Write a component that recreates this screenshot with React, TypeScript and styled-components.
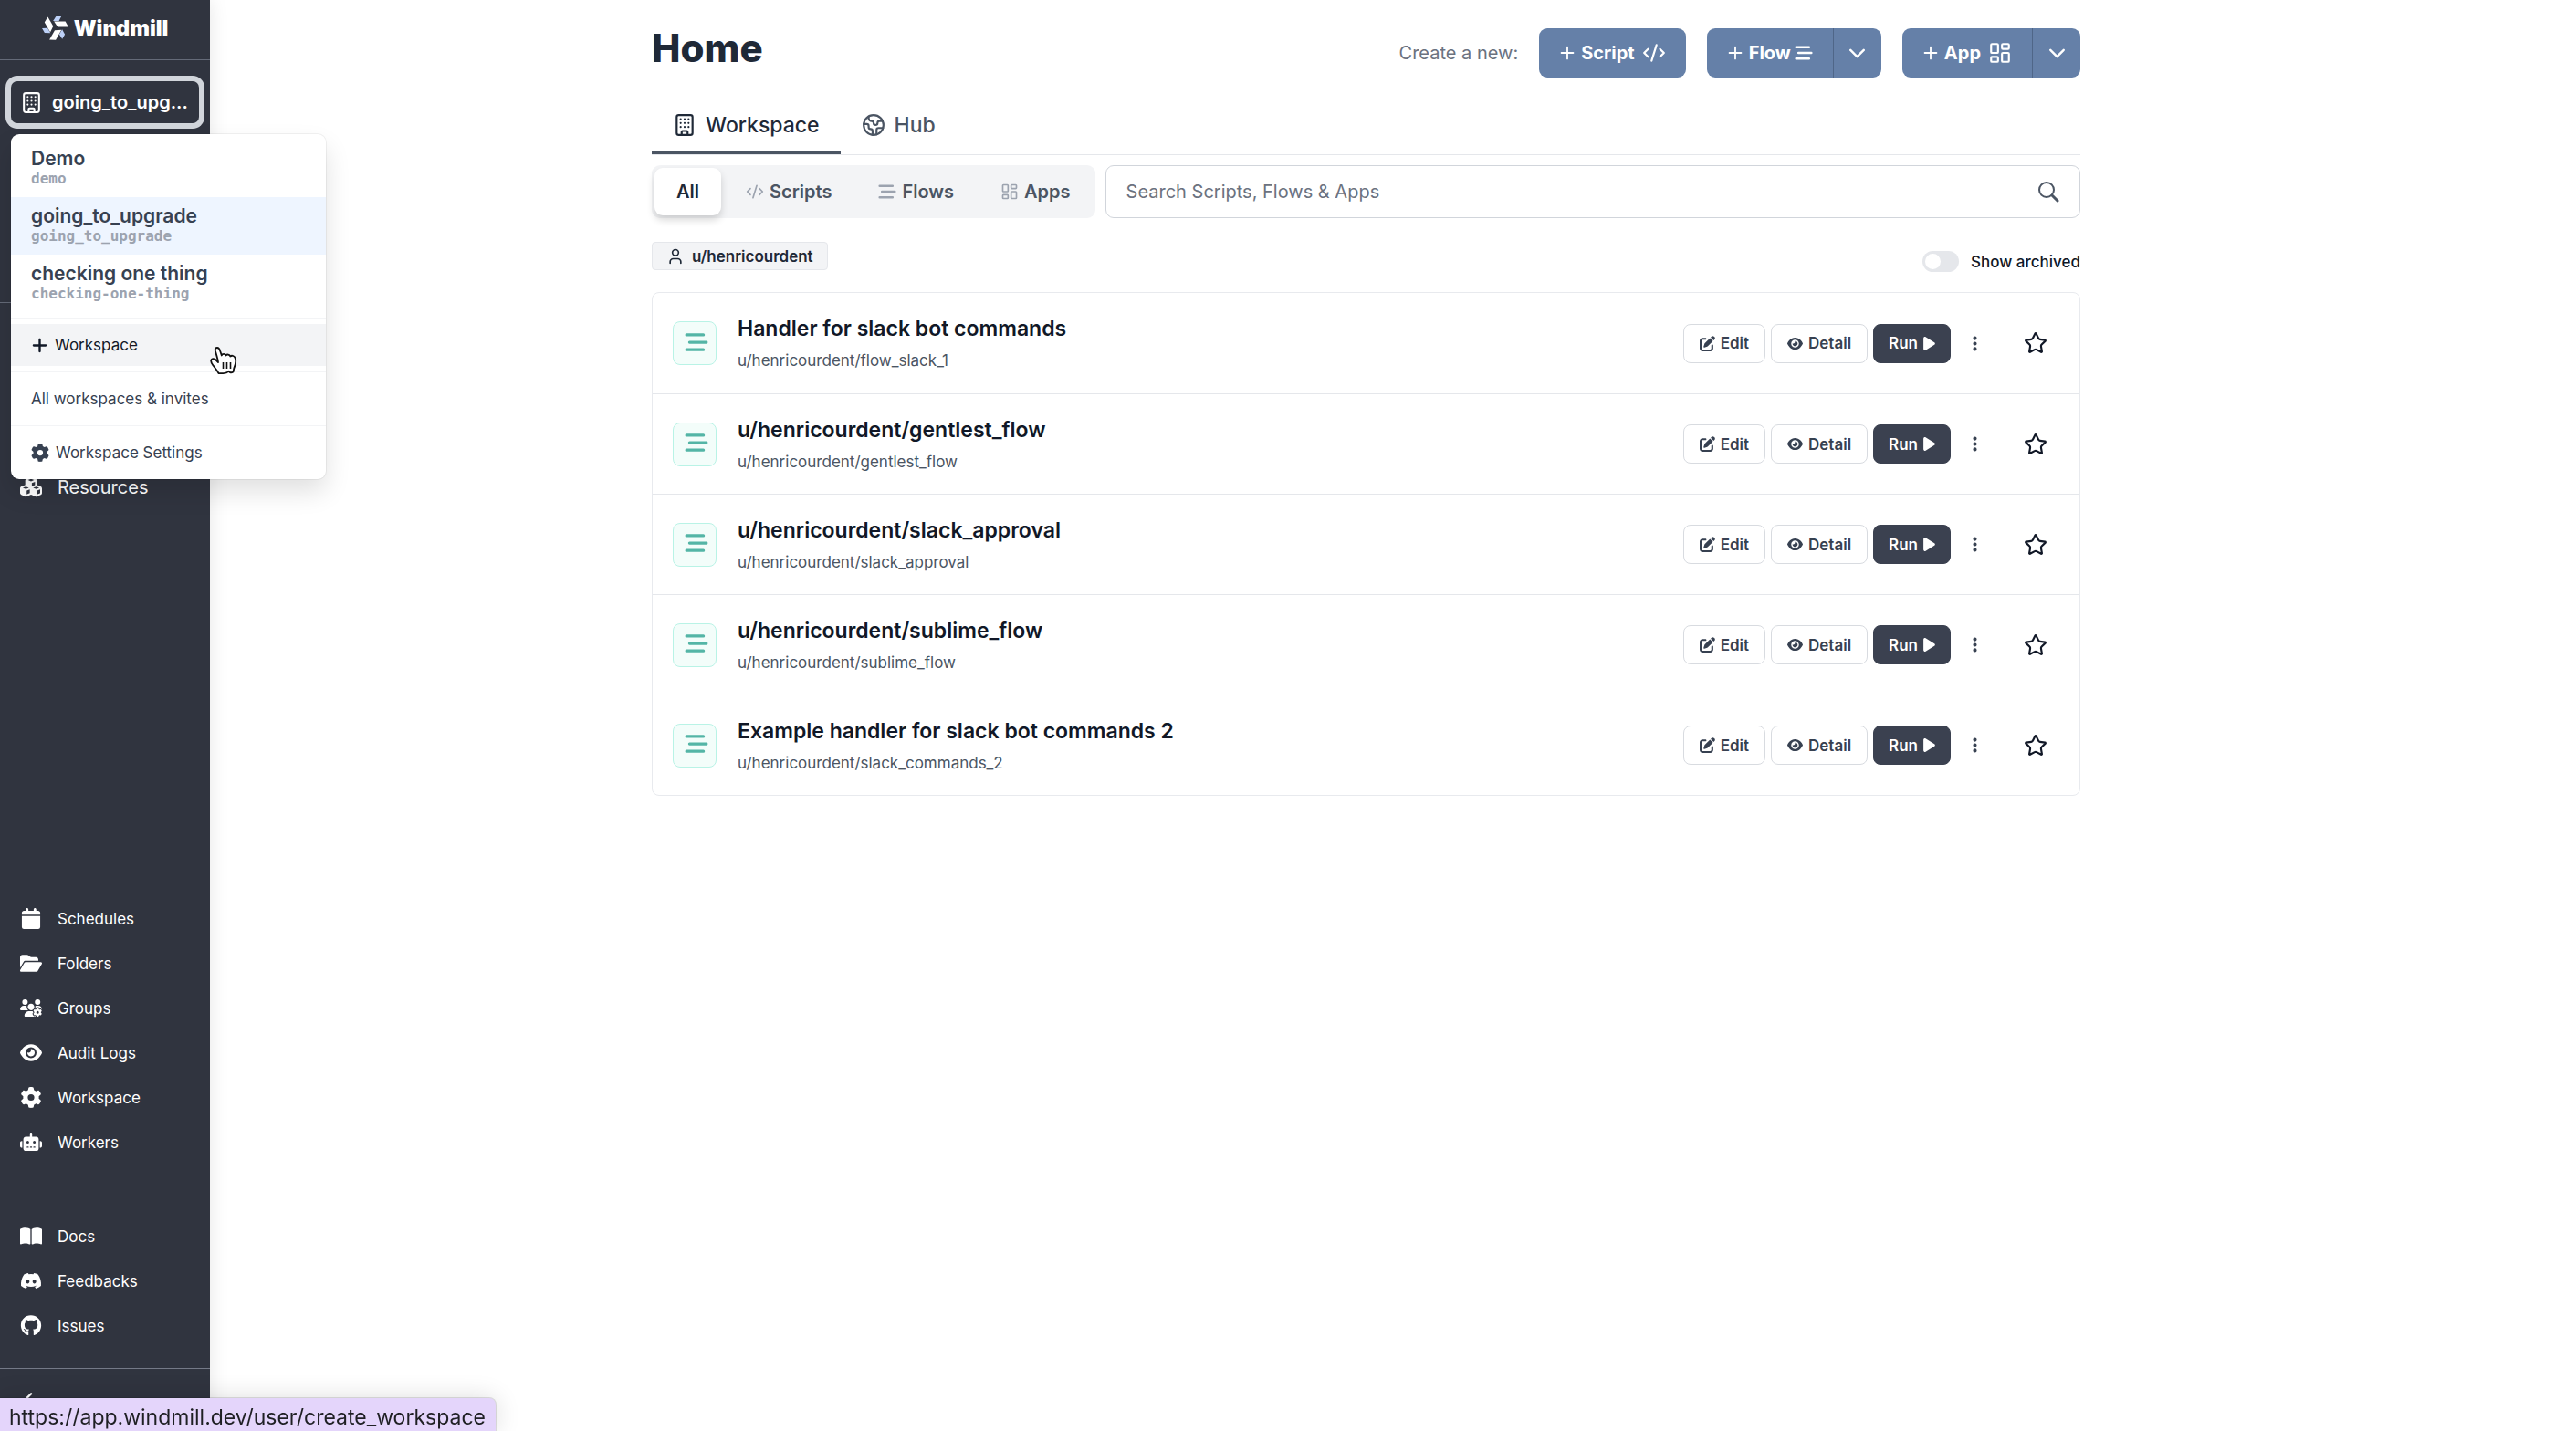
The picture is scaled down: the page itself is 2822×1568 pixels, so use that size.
import React from "react";
import styled, { createGlobalStyle, css } from "styled-components";
import {
  Building,
  ChevronDown,
  ChevronLeft,
  CodeXml,
  Earth,
  LayoutDashboard,
  Plus,
  Star,
  User,
} from "lucide-react";
import {
  FaBookOpen,
  FaCalendar,
  FaCubes,
  FaDiscord,
  FaEllipsisVertical,
  FaEye,
  FaFolderOpen,
  FaGear,
  FaGithub,
  FaPenToSquare,
  FaPlay,
  FaPlus,
  FaRobot,
  FaUsersGear,
} from "react-icons/fa6";

const GlobalStyle = createGlobalStyle`
  *, *::before, *::after { box-sizing: border-box; }
  body {
    margin: 0;
    background: #ffffff;
    color: #111827;
    font-family: Inter, "Liberation Sans", sans-serif;
    font-size: 17px;
  }
  h1, h2, p, ul { margin: 0; padding: 0; }
  ul { list-style: none; }
  a { color: inherit; text-decoration: none; }
  button, input { font: inherit; color: inherit; }
  button { background: none; border: 0; padding: 0; cursor: pointer; }
  svg { display: block; flex: none; }
`;

/* ---------- Shell ---------- */

const Shell = styled.div`
  display: flex;
  min-height: 100vh;
`;

const Sidebar = styled.aside`
  display: flex;
  flex-direction: column;
  flex: none;
  width: 230px;
  background: #30343f;
  color: #ffffff;
  box-shadow: 0 0 20px rgba(0, 0, 0, 0.1);
`;

const Brand = styled.a`
  display: flex;
  align-items: center;
  justify-content: center;
  gap: 6px;
  height: 66px;
  padding-bottom: 4px;
  border-bottom: 1px solid #646a78;
  font-size: 23px;
  font-weight: 900;
`;

const PickerSection = styled.div`
  position: relative;
  height: 266px;
  padding: 23px 12px 0;
  border-bottom: 1px solid #646a78;
`;

const PickerButton = styled.button`
  display: flex;
  align-items: center;
  gap: 10px;
  width: 100%;
  height: 46px;
  padding: 0 10px;
  border-radius: 7px;
  box-shadow: 0 0 0 6px #d1d5db;
  font-size: 20px;
  font-weight: 600;
`;

const PickerLabel = styled.span`
  white-space: nowrap;
`;

const Nav = styled.nav<{ $place: "top" | "bottom" }>`
  ${(p) =>
    p.$place === "top"
      ? css`
          padding-top: 177px;
          font-size: 20px;
        `
      : css`
          display: flex;
          flex-direction: column;
          gap: 54px;
          margin-top: auto;
          padding-bottom: 22px;
        `}
`;

const NavLink = styled.a`
  display: flex;
  align-items: center;
  gap: 17px;
  height: 49px;
  padding-left: 22px;

  svg {
    width: 24px;
  }
`;

const CollapseBar = styled.button`
  display: flex;
  align-items: flex-start;
  height: 69px;
  padding: 20px 16px;
  border-top: 1px solid #747987;
`;

/* ---------- Workspace menu ---------- */

const Menu = styled.div`
  position: absolute;
  z-index: 2;
  top: 81px;
  left: 12px;
  width: 345px;
  border-radius: 9px;
  background: #ffffff;
  color: #374151;
  box-shadow: 0 0 0 1px rgba(0, 0, 0, 0.05), 0 14px 28px rgba(0, 0, 0, 0.12);
  overflow: hidden;
`;

const MenuGroup = styled.div`
  padding: 6px 0;

  & + & {
    border-top: 1px solid #f3f4f6;
  }
`;

const WorkspaceOption = styled.button<{ $current?: boolean }>`
  display: block;
  width: 100%;
  height: 63px;
  padding: 0 22px 3px;
  background: ${(p) => (p.$current ? "#eef5ff" : "transparent")};
  text-align: left;
`;

const WorkspaceName = styled.span`
  display: block;
  line-height: 26px;
  font-size: 21px;
  font-weight: 600;
`;

const WorkspaceId = styled.span`
  display: block;
  line-height: 18px;
  color: #9ca3af;
  font-family: "DejaVu Sans Mono", monospace;
  font-size: 16px;
  font-weight: 700;
`;

const MenuLink = styled.a<{ $hover?: boolean }>`
  position: relative;
  display: flex;
  align-items: center;
  gap: 7px;
  height: 46px;
  padding: 0 22px;
  background: ${(p) => (p.$hover ? "#f3f4f6" : "transparent")};
  color: ${(p) => (p.$hover ? "#111827" : "inherit")};
`;

const Pointer = styled.svg`
  position: absolute;
  top: 25px;
  left: 218px;
`;

/* ---------- Content ---------- */

const Main = styled.main`
  flex: 1;
  min-width: 0;
  padding: 31px 59px 0 0;
`;

const Page = styled.div`
  max-width: 1565px;
  margin: 0 auto;
`;

const PageHeader = styled.header`
  display: flex;
  justify-content: space-between;
  height: 76px;
`;

const Title = styled.h1`
  line-height: 43px;
  color: #1f2937;
  font-size: 42px;
  font-weight: 800;
`;

const CreateBar = styled.div`
  display: flex;
  align-items: center;
  gap: 23px;
  height: 54px;
`;

const CreateHint = styled.span`
  color: #6b7280;
  font-size: 20px;
`;

const SplitButton = styled.div`
  display: flex;
  border-radius: 9px;
  background: #6580a8;
  color: #ffffff;
`;

const CreateButton = styled.button<{ $tight?: boolean }>`
  display: flex;
  align-items: center;
  gap: 4px;
  height: 54px;
  padding: 0 22px 0 20px;
  font-size: 20px;
  font-weight: 700;

  & > svg:last-child {
    margin-left: ${(p) => (p.$tight ? 0 : 4)}px;
  }
`;

const CreateMore = styled.button`
  display: grid;
  place-items: center;
  width: 53px;
  border-left: 1px solid #4f6688;
`;

const Tabs = styled.div`
  display: flex;
  border-bottom: 1px solid #e5e7eb;
`;

const Tab = styled.button<{ $active?: boolean }>`
  display: flex;
  align-items: center;
  gap: 10px;
  height: 62px;
  padding: 0 23px;
  border-bottom: 3px solid ${(p) => (p.$active ? "#4b5563" : "transparent")};
  color: ${(p) => (p.$active ? "#1f2937" : "#4b5563")};
  font-size: 23px;
  font-weight: 500;
`;

const FilterRow = styled.div`
  display: flex;
  gap: 11px;
  height: 58px;
  margin-top: 11px;
`;

const Toggles = styled.div`
  display: flex;
  gap: 3px;
  padding: 3px;
  border-radius: 9px;
  background: #f3f4f6;
`;

const Toggle = styled.button<{ $active?: boolean }>`
  display: flex;
  align-items: center;
  gap: 6px;
  padding: 0 24px;
  border-radius: 9px;
  color: #4b5563;
  font-size: 20px;
  font-weight: 600;

  svg {
    color: #9ca3af;
  }

  ${(p) =>
    p.$active &&
    css`
      background: #ffffff;
      color: #1f2937;
      box-shadow: 0 5px 9px rgba(0, 0, 0, 0.16);
    `}
`;

const SearchBox = styled.label`
  display: flex;
  align-items: center;
  flex: 1;
  padding: 0 22px;
  border: 1px solid #d1d5db;
  border-radius: 9px;
  color: #4b5563;
`;

const SearchInput = styled.input`
  flex: 1;
  min-width: 0;
  padding: 0;
  border: 0;
  outline: 0;
  background: transparent;
  font-size: 20px;

  &::placeholder {
    color: #6b7280;
  }
`;

const OwnerRow = styled.div`
  display: flex;
  justify-content: space-between;
  align-items: flex-start;
  height: 81px;
  padding-top: 26px;
`;

const OwnerChip = styled.button`
  display: flex;
  align-items: center;
  gap: 8px;
  height: 31px;
  padding: 0 15px;
  border: 1px solid #e5e7eb;
  border-radius: 4px;
  background: #f3f4f6;
  color: #1f2937;
  font-weight: 600;
`;

const ArchivedLabel = styled.label`
  display: flex;
  align-items: center;
  gap: 13px;
  height: 43px;
  font-weight: 500;
`;

const Switch = styled.input`
  appearance: none;
  display: flex;
  width: 40px;
  height: 23px;
  margin: 0;
  padding: 3px;
  border-radius: 12px;
  background: #e5e7eb;

  &::before {
    content: "";
    width: 17px;
    height: 17px;
    border-radius: 50%;
    background: #ffffff;
  }

  &:checked {
    justify-content: flex-end;
    background: #6580a8;
  }
`;

const List = styled.ul`
  border: 1px solid #e8eaee;
  border-radius: 8px;
`;

const Item = styled.li`
  display: flex;
  align-items: center;
  height: 110px;
  padding: 0 23px 0 22px;

  & + & {
    border-top: 1px solid #e5e7eb;
  }
`;

const ItemIcon = styled.span`
  display: grid;
  place-items: center;
  width: 48px;
  height: 48px;
  padding: 0 0 3px 3px;
  border: 1px solid #b9f3e6;
  border-radius: 8px;
  background: #f3fdfa;
  color: #54b5a6;
`;

const ItemText = styled.div`
  flex: 1;
  min-width: 0;
  margin-left: 23px;
  padding-top: 2px;
`;

const ItemTitle = styled.h2`
  line-height: 32px;
  color: #111827;
  font-size: 23px;
  font-weight: 600;
`;

const ItemPath = styled.p`
  margin-top: 4px;
  line-height: 30px;
  color: #4b5563;
`;

const Actions = styled.div`
  display: flex;
  align-items: center;
  gap: 6px;
`;

const Action = styled.button<{ $solid?: boolean }>`
  display: flex;
  align-items: center;
  gap: 6px;
  height: 43px;
  padding: 0 ${(p) => (p.$solid ? 16 : 17)}px;
  border: 1px solid ${(p) => (p.$solid ? "#3b4150" : "#d8dbe0")};
  border-radius: 8px;
  background: ${(p) => (p.$solid ? "#3b4150" : "#ffffff")};
  color: ${(p) => (p.$solid ? "#ffffff" : "#374151")};
  font-weight: 600;

  svg {
    width: ${(p) => (p.$solid ? 13 : 17)}px;
    height: 17px;
  }
`;

const MoreButton = styled.button`
  display: grid;
  place-items: center;
  width: 40px;
  height: 43px;
  color: #374151;
`;

const StarButton = styled(MoreButton)`
  width: 50px;
  margin-left: 16px;
  color: #111827;
`;

const StatusBar = styled.div`
  position: fixed;
  z-index: 3;
  bottom: 0;
  left: 0;
  height: 36px;
  padding: 0 11px 0 10px;
  border-top-right-radius: 7px;
  background: #e4d5fb;
  color: #1f2024;
  box-shadow: 0 0 0 1px rgba(0, 0, 0, 0.12), 0 0 28px rgba(0, 0, 0, 0.14);
  font-size: 23px;
  line-height: 42px;
`;

/* ---------- Drawings ---------- */

function WindmillLogo() {
  return (
    <svg width="29" height="27" viewBox="-43 -40 86 80" aria-hidden="true">
      {[0, 120, 240].map((angle) => (
        <g key={angle} transform={`rotate(${angle})`}>
          <path d="M-7 -22 L3 -38 H20 L12 -22 Z" fill="#bcd0f7" />
          <path d="M-4 -21 H33 L43 -3 H8 Z" fill="#ffffff" />
        </g>
      ))}
    </svg>
  );
}

function FlowIcon({ size, stroke = 2 }: { size: number; stroke?: number }) {
  return (
    <svg
      width={size}
      height={size}
      viewBox="0 0 24 24"
      fill="none"
      stroke="currentColor"
      strokeWidth={stroke}
      strokeLinecap="round"
      aria-hidden="true"
    >
      <path d="M2 4.500H19M5 12H22M2 19.500H19" />
    </svg>
  );
}

function SearchIcon() {
  return (
    <svg width="24" height="24" viewBox="0 0 24 24" fill="none" stroke="currentColor" strokeWidth="2" aria-hidden="true">
      <circle cx="10" cy="10" r="8" />
      <path d="M16 16L22 22" strokeWidth="3" strokeLinecap="round" />
    </svg>
  );
}

function HandPointer() {
  return (
    <Pointer width="30" height="30" viewBox="0 0 30 30" aria-hidden="true">
      <path
        d="M9.500 29
           C8 26 5 22.500 3.500 20.500
           C2 18.500 .8 16 1.300 14.500
           C1.800 12.800 4 12.500 6 14
           L9 17
           C8.500 13 7 8.500 6 5
           C5.200 2.200 6.300 1 8 1
           C10 1 10.800 3 11.300 5
           L12.800 9.500
           C13.500 7.500 16.500 7.300 17.500 9.500
           C18.800 7.800 21.500 8.300 22.300 10.500
           C24 9 27 10 27.700 12.500
           C28.600 15.500 28 20 26.300 23.500
           L25.500 27.500
           C23.500 28.700 21.500 28.500 20.500 26.800
           C18 29.300 12.500 29.300 9.500 29 Z"
        fill="#ffffff"
        stroke="#111111"
        strokeWidth="1.800"
        strokeLinejoin="round"
      />
      <path d="M14.500 17V24M18.500 17V24M22.500 17V24" stroke="#111111" strokeWidth="1.600" />
    </Pointer>
  );
}

/* ---------- Data ---------- */

const workspaces = [
  { name: "Demo", id: "demo" },
  { name: "going_to_upgrade", id: "going_to_upgrade", current: true },
  { name: "checking one thing", id: "checking-one-thing" },
];

const navGroups = [
  [
    { label: "Schedules", Icon: FaCalendar },
    { label: "Folders", Icon: FaFolderOpen },
    { label: "Groups", Icon: FaUsersGear },
    { label: "Audit Logs", Icon: FaEye },
    { label: "Workspace", Icon: FaGear },
    { label: "Workers", Icon: FaRobot },
  ],
  [
    { label: "Docs", Icon: FaBookOpen },
    { label: "Feedbacks", Icon: FaDiscord },
    { label: "Issues", Icon: FaGithub },
  ],
];

const items = [
  { title: "Handler for slack bot commands", path: "u/henricourdent/flow_slack_1" },
  { title: "u/henricourdent/gentlest_flow", path: "u/henricourdent/gentlest_flow" },
  { title: "u/henricourdent/slack_approval", path: "u/henricourdent/slack_approval" },
  { title: "u/henricourdent/sublime_flow", path: "u/henricourdent/sublime_flow" },
  { title: "Example handler for slack bot commands 2", path: "u/henricourdent/slack_commands_2" },
];

/* ---------- App ---------- */

function WorkspaceMenu() {
  return (
    <Menu>
      <MenuGroup>
        {workspaces.map((w) => (
          <WorkspaceOption key={w.id} type="button" $current={w.current}>
            <WorkspaceName>{w.name}</WorkspaceName>
            <WorkspaceId>{w.id}</WorkspaceId>
          </WorkspaceOption>
        ))}
      </MenuGroup>
      <MenuGroup>
        <MenuLink href="#create" $hover>
          <FaPlus size={19} />
          Workspace
          <HandPointer />
        </MenuLink>
      </MenuGroup>
      <MenuGroup>
        <MenuLink href="#workspaces">All workspaces &amp; invites</MenuLink>
      </MenuGroup>
      <MenuGroup>
        <MenuLink href="#settings">
          <FaGear size={20} />
          Workspace Settings
        </MenuLink>
      </MenuGroup>
    </Menu>
  );
}

export default function App() {
  return (
    <>
      <GlobalStyle />
      <Shell>
        <Sidebar>
          <Brand href="#home">
            <WindmillLogo />
            Windmill
          </Brand>
          <PickerSection>
            <PickerButton type="button">
              <Building size={25} strokeWidth={2} />
              <PickerLabel>going_to_upg...</PickerLabel>
            </PickerButton>
            <WorkspaceMenu />
          </PickerSection>
          <Nav $place="top">
            <NavLink href="#resources">
              <FaCubes size={23} />
              Resources
            </NavLink>
          </Nav>
          <Nav $place="bottom">
            {navGroups.map((group) => (
              <div key={group[0].label}>
                {group.map(({ label, Icon }) => (
                  <NavLink key={label} href={`#${label}`}>
                    <Icon size={23} />
                    {label}
                  </NavLink>
                ))}
              </div>
            ))}
          </Nav>
          <CollapseBar type="button" aria-label="Collapse sidebar">
            <ChevronLeft size={29} strokeWidth={2} />
          </CollapseBar>
        </Sidebar>

        <Main>
          <Page>
            <PageHeader>
              <Title>Home</Title>
              <CreateBar>
                <CreateHint>Create a new:</CreateHint>
                <SplitButton>
                  <CreateButton type="button">
                    <Plus size={22} />
                    Script
                    <CodeXml size={26} />
                  </CreateButton>
                </SplitButton>
                <SplitButton>
                  <CreateButton type="button" $tight>
                    <Plus size={22} />
                    Flow
                    <FlowIcon size={20} stroke={3} />
                  </CreateButton>
                  <CreateMore type="button" aria-label="More flow options">
                    <ChevronDown size={29} strokeWidth={2} />
                  </CreateMore>
                </SplitButton>
                <SplitButton>
                  <CreateButton type="button">
                    <Plus size={22} />
                    App
                    <LayoutDashboard size={26} strokeWidth={2} />
                  </CreateButton>
                  <CreateMore type="button" aria-label="More app options">
                    <ChevronDown size={29} strokeWidth={2} />
                  </CreateMore>
                </SplitButton>
              </CreateBar>
            </PageHeader>

            <Tabs>
              <Tab type="button" $active>
                <Building size={26} strokeWidth={2} />
                Workspace
              </Tab>
              <Tab type="button">
                <Earth size={26} strokeWidth={2} />
                Hub
              </Tab>
            </Tabs>

            <FilterRow>
              <Toggles>
                <Toggle type="button" $active>
                  All
                </Toggle>
                <Toggle type="button">
                  <CodeXml size={20} />
                  Scripts
                </Toggle>
                <Toggle type="button">
                  <FlowIcon size={20} stroke={3} />
                  Flows
                </Toggle>
                <Toggle type="button">
                  <LayoutDashboard size={20} />
                  Apps
                </Toggle>
              </Toggles>
              <SearchBox>
                <SearchInput type="text" aria-label="Search" placeholder="Search Scripts, Flows & Apps" />
                <SearchIcon />
              </SearchBox>
            </FilterRow>

            <OwnerRow>
              <OwnerChip type="button">
                <User size={20} strokeWidth={2} />
                u/henricourdent
              </OwnerChip>
              <ArchivedLabel>
                <Switch type="checkbox" />
                Show archived
              </ArchivedLabel>
            </OwnerRow>

            <List>
              {items.map((item) => (
                <Item key={item.path}>
                  <ItemIcon>
                    <FlowIcon size={26} stroke={3} />
                  </ItemIcon>
                  <ItemText>
                    <ItemTitle>{item.title}</ItemTitle>
                    <ItemPath>{item.path}</ItemPath>
                  </ItemText>
                  <Actions>
                    <Action type="button">
                      <FaPenToSquare />
                      Edit
                    </Action>
                    <Action type="button">
                      <FaEye />
                      Detail
                    </Action>
                    <Action type="button" $solid>
                      Run
                      <FaPlay />
                    </Action>
                    <MoreButton type="button" aria-label="More actions">
                      <FaEllipsisVertical size={19} />
                    </MoreButton>
                    <StarButton type="button" aria-label="Add to favorites">
                      <Star size={26} strokeWidth={2} />
                    </StarButton>
                  </Actions>
                </Item>
              ))}
            </List>
          </Page>
        </Main>
      </Shell>
      <StatusBar>https://app.windmill.dev/user/create_workspace</StatusBar>
    </>
  );
}
